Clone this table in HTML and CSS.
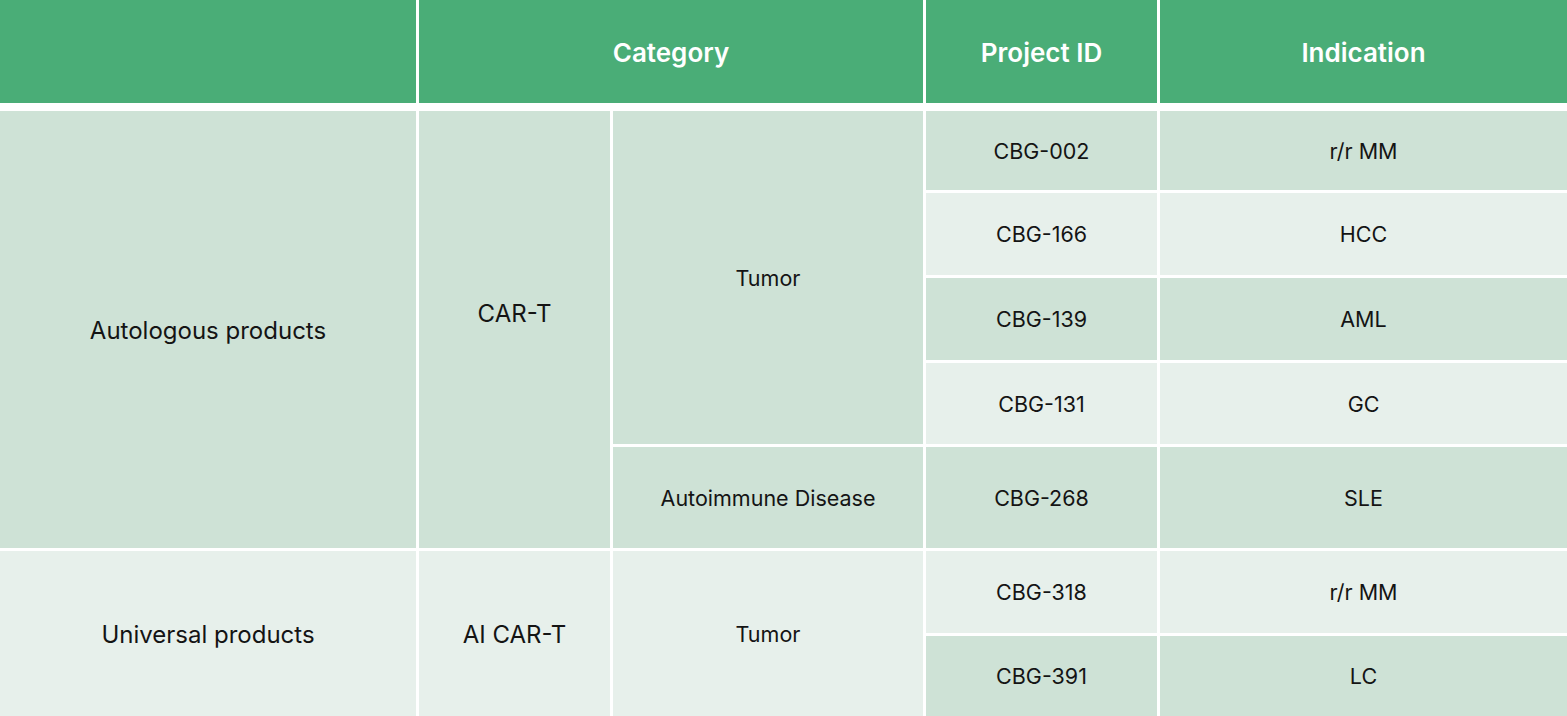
FILE: index.html
```html
<!DOCTYPE html>
<html lang="en">
<head>
<meta charset="utf-8">
<title>Pipeline</title>
<link rel="stylesheet" href="styles.css">
</head>
<body>
<div class="pipeline">
  <div class="cell head"></div>
  <div class="cell head span-c2">Category</div>
  <div class="cell head">Project ID</div>
  <div class="cell head">Indication</div>

  <div class="cell dark rows-5 big">Autologous products</div>
  <div class="cell dark rows-5 big raise">CAR-T</div>
  <div class="cell dark rows-4">Tumor</div>
  <div class="cell dark">CBG-002</div>
  <div class="cell dark">r/r MM</div>

  <div class="cell light">CBG-166</div>
  <div class="cell light">HCC</div>

  <div class="cell dark">CBG-139</div>
  <div class="cell dark">AML</div>

  <div class="cell light">CBG-131</div>
  <div class="cell light">GC</div>

  <div class="cell dark">Autoimmune Disease</div>
  <div class="cell dark">CBG-268</div>
  <div class="cell dark">SLE</div>

  <div class="cell light rows-2 big">Universal products</div>
  <div class="cell light rows-2 big">AI CAR-T</div>
  <div class="cell light rows-2">Tumor</div>
  <div class="cell light">CBG-318</div>
  <div class="cell light">r/r MM</div>

  <div class="cell dark">CBG-391</div>
  <div class="cell dark">LC</div>
</div>
</body>
</html>
```
FILE: styles.css
```css
html, body {
  margin: 0;
  padding: 0;
  background: #ffffff;
  overflow: hidden;
}

.pipeline {
  display: grid;
  grid-template-columns: 416px 191px 310px 231px 407px;
  grid-template-rows: 108px 79px 82px 82px 81px 101px 82px 80px;
  column-gap: 3px;
  row-gap: 3px;
  width: 1567px;
  font-family: Inter, "Noto Sans", "Liberation Sans", sans-serif;
  color: #141414;
}

.cell {
  display: flex;
  align-items: center;
  justify-content: center;
  text-align: center;
  font-size: 21.5px;
  line-height: 1;
  padding-top: 2px;
}

.head {
  background: #4aad77;
  color: #ffffff;
  font-size: 26px;
  font-weight: 600;
  margin-bottom: 5px;
}

.span-c2 { grid-column: span 2; }
.rows-2 { grid-row: span 2; }
.rows-4 { grid-row: span 4; }
.rows-5 { grid-row: span 5; }

.dark { background: #cee2d6; }
.light { background: #e7f0eb; }

.big { font-size: 24px; }
.raise { padding-bottom: 34px; }
```
